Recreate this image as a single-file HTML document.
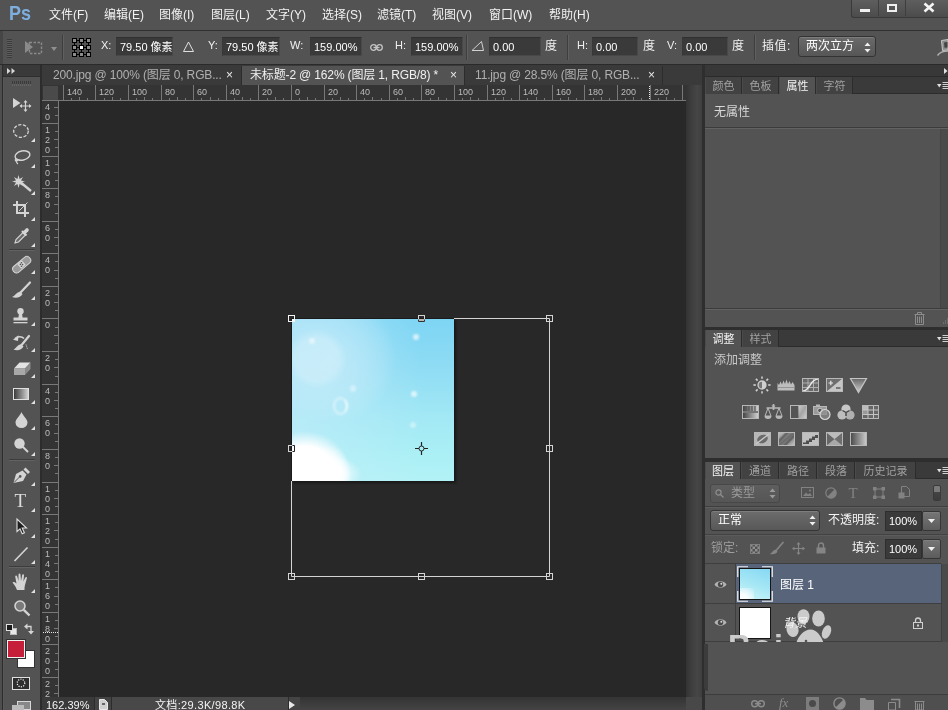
<!DOCTYPE html>
<html lang="zh-CN">
<head>
<meta charset="utf-8">
<title>Photoshop</title>
<style>
html,body{margin:0;padding:0;}
body{width:948px;height:710px;overflow:hidden;position:relative;background:#282828;
 font-family:"Liberation Sans","Noto Sans CJK SC",sans-serif;font-size:12px;color:#e6e6e6;}
#root{position:absolute;left:0;top:0;width:948px;height:710px;overflow:hidden;will-change:transform;}
.a{position:absolute;}
.t{position:absolute;white-space:nowrap;line-height:14px;}
svg{position:absolute;overflow:visible;}
#menubar{left:0;top:0;width:948px;height:30px;background:#535353;}
#menubar .t{top:8px;font-size:12px;color:#f2f2f2;}
#optbar{left:0;top:30px;width:948px;height:35px;background:#535353;border-top:1px solid #303030;border-bottom:1px solid #2a2a2a;box-sizing:border-box;z-index:2;}
.inp{position:absolute;top:6px;height:19px;background:#3a3a3a;box-sizing:border-box;border:1px solid #484848;border-top-color:#303030;border-left-color:#383838;color:#fff;font-size:11px;line-height:18px;padding-left:3px;white-space:nowrap;}
#optbar .t{top:7px;color:#f0f0f0;font-size:11px}
.sep{position:absolute;top:4px;width:1px;height:25px;background:#3e3e3e;border-right:1px solid #606060;}
#tools{left:3px;top:64px;width:37px;height:646px;background:#535353;border-left:1px solid #585858;box-sizing:border-box}
#toolhead{left:-1px;top:0;width:37px;height:12px;background:#3a3a3a;border-bottom:1px solid #2e2e2e}
.tsep{position:absolute;left:5px;width:26px;height:1px;background:#3c3c3c;border-bottom:1px solid #626262;}
#tabbar{left:42px;top:64px;width:661px;height:21px;background:#3a3a3a;}
.tab{position:absolute;top:2px;height:19px;box-sizing:border-box;font-size:12px;letter-spacing:-.15px;line-height:18px;color:#b0b0b0;white-space:nowrap;border-right:1px solid #2c2c2c;}
.tab.on{background:#535353;color:#f0f0f0;}
.tab span{position:absolute;top:0}
#hruler{left:42px;top:85px;width:644px;height:16px;background:#343434;}
#vruler{left:42px;top:101px;width:17px;height:596px;background:#343434;}
#canvas{left:59px;top:101px;width:627px;height:596px;background:#282828;}
#vscroll{left:686px;top:85px;width:16px;height:612px;background:linear-gradient(90deg,#333 0,#3e3e3e 35%,#464646 72%,#3e3e3e 100%);}
#status{left:42px;top:697px;width:661px;height:13px;background:#3a3a3a;}
#dock{left:702px;top:64px;width:246px;height:646px;background:#2e2e2e;}
.phead{position:absolute;left:3px;width:243px;background:#3a3a3a;}
.pbody{position:absolute;left:3px;width:243px;background:#535353;}
.ptab{position:absolute;top:0;height:17px;font-size:12px;line-height:19px;color:#a0a0a0;white-space:nowrap;box-sizing:border-box;overflow:hidden;border-right:1px solid #2c2c2c;border-left:1px solid #4a4a4a;text-align:center;background:#424242}
.ptab.on{background:#535353;color:#f4f4f4;}
.rt{font-size:9px;fill:#bcbcbc;font-family:"Liberation Sans",sans-serif}
</style>
</head>
<body>
<div id="root">
<div id="menubar" class="a">
<svg style="left:9px;top:4px" width="24" height="20"><text x="0" y="16.2" font-family="Liberation Sans,sans-serif" font-weight="bold" font-size="21" textLength="22" lengthAdjust="spacingAndGlyphs" fill="#7eaede">Ps</text></svg>
<span class="t" style="left:49px">文件(F)</span><span class="t" style="left:104px">编辑(E)</span><span class="t" style="left:159px">图像(I)</span><span class="t" style="left:211px">图层(L)</span><span class="t" style="left:266px">文字(Y)</span><span class="t" style="left:322px">选择(S)</span><span class="t" style="left:377px">滤镜(T)</span><span class="t" style="left:432px">视图(V)</span><span class="t" style="left:489px">窗口(W)</span><span class="t" style="left:549px">帮助(H)</span>
<div class="a" style="left:851px;top:0;width:97px;height:18px;background:linear-gradient(#5e5e5e,#4c4c4c);border-left:1px solid #3a3a3a;border-bottom:1px solid #3a3a3a;border-radius:0 0 0 3px;box-sizing:border-box"></div><div class="a" style="left:878px;top:0;width:1px;height:16px;background:#3e3e3e"></div><div class="a" style="left:905px;top:0;width:1px;height:16px;background:#3e3e3e"></div><div class="a" style="left:860px;top:9px;width:10px;height:3px;background:#f0f0f0"></div><div class="a" style="left:887px;top:4px;width:10px;height:8px;border:2px solid #f0f0f0;border-top-width:2px;box-sizing:border-box"></div><svg style="left:923px;top:3px" width="12" height="9"><path d="M1.500 0.500L10.500 8.500M10.500 0.500L1.500 8.500" stroke="#f4f4f4" stroke-width="2.600"/></svg></div>
<div id="optbar" class="a">
<div class="a" style="left:0;top:0;width:3px;height:33px;background:#464646"></div><div class="a" style="left:7px;top:8px;width:5px;height:19px;background:repeating-linear-gradient(#3c3c3c 0,#3c3c3c 1px,#5c5c5c 1px,#5c5c5c 2px)"></div><svg style="left:24px;top:9px" width="20" height="16"><path d="M1 1L1 13L9 7Z" fill="#8a8a8a"/><rect x="5.5" y="2.5" width="12" height="11" fill="none" stroke="#8a8a8a" stroke-width="1.4" stroke-dasharray="2.5 1.5"/></svg><svg style="left:51px;top:16px" width="7" height="4"><path d="M0 0L6 0L3 4Z" fill="#909090"/></svg><div class="sep" style="left:62px"></div><svg style="left:72px;top:7px" width="20" height="20"><path d="M2.500 2.500H16.500V16.500H2.500ZM9.500 2.500V16.500M2.500 9.500H16.500" stroke="#000" stroke-width="1" fill="none"/><rect x="0.5" y="0.5" width="4" height="4" fill="#8c8c8c" stroke="#000" stroke-width="1"/><rect x="0.5" y="7.5" width="4" height="4" fill="#8c8c8c" stroke="#000" stroke-width="1"/><rect x="0.5" y="14.5" width="4" height="4" fill="#8c8c8c" stroke="#000" stroke-width="1"/><rect x="7.5" y="0.5" width="4" height="4" fill="#8c8c8c" stroke="#000" stroke-width="1"/><rect x="7.5" y="7.5" width="4" height="4" fill="#fff" stroke="#000" stroke-width="1"/><rect x="7.5" y="14.5" width="4" height="4" fill="#8c8c8c" stroke="#000" stroke-width="1"/><rect x="14.5" y="0.5" width="4" height="4" fill="#8c8c8c" stroke="#000" stroke-width="1"/><rect x="14.5" y="7.5" width="4" height="4" fill="#8c8c8c" stroke="#000" stroke-width="1"/><rect x="14.5" y="14.5" width="4" height="4" fill="#8c8c8c" stroke="#000" stroke-width="1"/></svg><span class="t" style="left:101px">X:</span><div class="inp" style="left:116px;width:57px">79.50 像素</div><svg style="left:182px;top:10px" width="13" height="12"><path d="M6.5 1L11.5 10.5H1.5Z" fill="none" stroke="#e0e0e0" stroke-width="1"/></svg><span class="t" style="left:208px">Y:</span><div class="inp" style="left:222px;width:58px">79.50 像素</div><span class="t" style="left:290px">W:</span><div class="inp" style="left:310px;width:52px">159.00%</div><svg style="left:370px;top:13px" width="13" height="8"><rect x="0.700" y="0.700" width="5.600" height="5.600" rx="2.800" fill="none" stroke="#c4c4c4" stroke-width="1.300"/><rect x="6.700" y="0.700" width="5.600" height="5.600" rx="2.800" fill="none" stroke="#c4c4c4" stroke-width="1.300"/><path d="M3.500 3.500H9.500" stroke="#c4c4c4" stroke-width="1.300"/></svg><span class="t" style="left:395px">H:</span><div class="inp" style="left:411px;width:52px">159.00%</div><div class="sep" style="left:466px"></div><svg style="left:471px;top:9px" width="14" height="12"><path d="M1 10.500L10.500 1.500L12.500 10.500Z" fill="none" stroke="#d0d0d0" stroke-width="1"/></svg><div class="inp" style="left:489px;width:52px">0.00</div><span class="t" style="left:545px;top:8px;font-size:12px">度</span><div class="sep" style="left:567px"></div><span class="t" style="left:577px">H:</span><div class="inp" style="left:592px;width:46px">0.00</div><span class="t" style="left:643px;top:8px;font-size:12px">度</span><span class="t" style="left:667px">V:</span><div class="inp" style="left:682px;width:46px">0.00</div><span class="t" style="left:732px;top:8px;font-size:12px">度</span><div class="sep" style="left:754px"></div><span class="t" style="left:762px;top:8px;font-size:12px;letter-spacing:.5px">插值:</span><div class="a" style="left:798px;top:5px;width:78px;height:21px;box-sizing:border-box;border:1px solid #333;border-radius:3px;background:linear-gradient(#6a6a6a,#565656);color:#fff;line-height:19px;padding-left:7px;box-shadow:inset 0 1px 0 #7c7c7c">两次立方</div><svg style="left:864px;top:11px" width="7" height="11"><path d="M0.5 4L3.5 0.5L6.5 4ZM0.5 7L3.5 10.5L6.5 7Z" fill="#f0f0f0"/></svg><svg style="left:936px;top:8px" width="12" height="18"><path d="M5.500 1.500L12 0.500V11L6.500 11.500Z" fill="#8a8a8a" stroke="#c8c8c8" stroke-width="1"/><path d="M8 3.500L11.500 3V8.500L8.500 8.800Z" fill="#444"/><path d="M1.500 16.500C4 13 8 12 12 12" fill="none" stroke="#b0b0b0" stroke-width="1.400"/></svg></div>
<div class="a" style="left:0;top:64px;width:2px;height:646px;background:#4e4e4e"></div><div class="a" style="left:2px;top:64px;width:1px;height:646px;background:#2c2c2c"></div><div id="tools" class="a">
<div id="toolhead" class="a"></div>
<svg style="left:3px;top:4px" width="9" height="6"><path d="M0 0L3.5 3L0 6ZM4.5 0L8 3L4.5 6Z" fill="#d8d8d8"/></svg><div class="a" style="left:8px;top:17px;width:19px;height:3px;background:repeating-linear-gradient(90deg,#3a3a3a 0,#3a3a3a 1px,#535353 1px,#535353 2px)"></div><div class="a" style="left:8px;top:20px;width:19px;height:2px;background:repeating-linear-gradient(90deg,#646464 0,#646464 1px,#535353 1px,#535353 2px)"></div><svg style="left:9px;top:34px" width="18" height="14" viewBox="0 0 18 14"><path d="M0 0L0 10L7.5 5Z" fill="#d4d4d4"/><path d="M12.5 3V13M7.5 8H17.5" stroke="#d4d4d4" stroke-width="1.2" fill="none"/><path d="M12.5 2L14.5 4.5H10.5ZM12.5 14L14.5 11.5H10.5ZM6.5 8L9 6V10ZM18.5 8L16 6V10Z" fill="#d4d4d4"/></svg>
<svg style="left:9px;top:60px" width="17" height="15" viewBox="0 0 17 15"><ellipse cx="8" cy="7" rx="7.3" ry="6.3" fill="none" stroke="#d4d4d4" stroke-width="1.3" stroke-dasharray="3.2 1.6"/></svg>
<svg style="left:27px;top:74px" width="4" height="4"><path d="M4 0V4H0Z" fill="#e0e0e0"/></svg><svg style="left:9px;top:86px" width="18" height="16" viewBox="0 0 18 16"><ellipse cx="9.5" cy="5.5" rx="7.5" ry="4.6" fill="none" stroke="#d4d4d4" stroke-width="1.4" transform="rotate(-12 9.5 5.5)"/><path d="M3.2 8.5C1.5 9.5 2.2 11.5 4 11C5.5 10.5 4.5 9 3.5 10C2.8 11 3.6 13 5 14" fill="none" stroke="#d4d4d4" stroke-width="1.1"/></svg>
<svg style="left:27px;top:100px" width="4" height="4"><path d="M4 0V4H0Z" fill="#e0e0e0"/></svg><svg style="left:8px;top:111px" width="21" height="18" viewBox="0 0 21 18"><path d="M7 6L19 16" stroke="#d4d4d4" stroke-width="2.4"/><path d="M6.5 0L7.6 4L11 2L9 5.4L13 6.5L9 7.6L11 11L7.6 9L6.5 13L5.4 9L2 11L4 7.6L0 6.5L4 5.4L2 2L5.4 4Z" fill="#d4d4d4"/></svg>
<svg style="left:27px;top:127px" width="4" height="4"><path d="M4 0V4H0Z" fill="#e0e0e0"/></svg><svg style="left:9px;top:137px" width="16" height="16" viewBox="0 0 16 16"><path d="M4 0V12H16M0 4H12V16" fill="none" stroke="#d4d4d4" stroke-width="2"/><path d="M6 10L14.5 1.5" stroke="#d4d4d4" stroke-width="1"/></svg>
<svg style="left:27px;top:153px" width="4" height="4"><path d="M4 0V4H0Z" fill="#e0e0e0"/></svg><svg style="left:10px;top:163px" width="16" height="17" viewBox="0 0 16 17"><path d="M1 16L2 12.5L9 5.5L11.5 8L4.5 15Z" fill="#6a6a6a" stroke="#d4d4d4" stroke-width="1.1"/><path d="M8 4L12.5 8.5" stroke="#d4d4d4" stroke-width="2.2"/><path d="M10.5 5.5L13 3" stroke="#d4d4d4" stroke-width="3.6" stroke-linecap="round"/></svg>
<svg style="left:27px;top:179px" width="4" height="4"><path d="M4 0V4H0Z" fill="#e0e0e0"/></svg><div class="tsep" style="top:185px"></div><svg style="left:9px;top:192px" width="17" height="17" viewBox="0 0 17 17"><rect x="-2" y="5" width="21" height="7.6" rx="3.6" fill="#9a9a9a" stroke="#d4d4d4" stroke-width="1" transform="rotate(-40 8.5 8.5)"/><rect x="5.5" y="5.5" width="6" height="6" fill="#d4d4d4" transform="rotate(-40 8.5 8.5)"/><circle cx="7.4" cy="8.4" r="0.8" fill="#555"/><circle cx="9.6" cy="8.6" r="0.8" fill="#555"/><circle cx="8.5" cy="6.8" r="0.8" fill="#555"/><circle cx="8.5" cy="10.2" r="0.8" fill="#555"/></svg>
<svg style="left:27px;top:206px" width="4" height="4"><path d="M4 0V4H0Z" fill="#e0e0e0"/></svg><svg style="left:8px;top:218px" width="19" height="17" viewBox="0 0 19 17"><path d="M18 0.5L9 10" stroke="#d4d4d4" stroke-width="2.2" stroke-linecap="round"/><path d="M8 9.5L10.5 12C9 15.5 4 16.5 0 15C3 14 3.5 11 8 9.5Z" fill="#d4d4d4"/></svg>
<svg style="left:27px;top:232px" width="4" height="4"><path d="M4 0V4H0Z" fill="#e0e0e0"/></svg><svg style="left:9px;top:244px" width="16" height="16" viewBox="0 0 16 16"><circle cx="7.5" cy="3.2" r="3.2" fill="#d4d4d4"/><path d="M6 5H9L9.6 10H5.4Z" fill="#d4d4d4"/><rect x="0.5" y="9.5" width="14" height="3" fill="#d4d4d4"/><rect x="0.5" y="14" width="14" height="1.3" fill="#d4d4d4"/></svg>
<svg style="left:27px;top:258px" width="4" height="4"><path d="M4 0V4H0Z" fill="#e0e0e0"/></svg><svg style="left:8px;top:270px" width="19" height="17" viewBox="0 0 19 17"><path d="M17 2L10 10.5" stroke="#d4d4d4" stroke-width="2.2" stroke-linecap="round"/><path d="M9 10L11.5 12.5C10 16 5 17 1.5 15.5C4 14.5 4.5 11.5 9 10Z" fill="#d4d4d4"/><path d="M3 4.5C6 2 10 2.5 12 4.5" fill="none" stroke="#d4d4d4" stroke-width="1.6"/><path d="M1 5.8L6.5 1.2L6 7Z" fill="#d4d4d4"/><path d="M14 10.5L15.5 15" stroke="#d4d4d4" stroke-width="1" stroke-dasharray="1 1"/></svg>
<svg style="left:27px;top:284px" width="4" height="4"><path d="M4 0V4H0Z" fill="#e0e0e0"/></svg><svg style="left:9px;top:298px" width="18" height="14" viewBox="0 0 18 14"><path d="M6.5 0.5H17.5L12 6.5H1Z" fill="#e2e2e2"/><path d="M1 6.5H12V13H1Z" fill="#a8a8a8"/><path d="M12 6.5L17.5 0.5V7L12 13Z" fill="#8a8a8a"/></svg>
<svg style="left:27px;top:310px" width="4" height="4"><path d="M4 0V4H0Z" fill="#e0e0e0"/></svg><div class="a" style="left:9px;top:324px;width:16px;height:12px;box-sizing:border-box;border:1px solid #e0e0e0;background:linear-gradient(90deg,#3c3c3c,#d0d0d0)"></div><svg style="left:27px;top:336px" width="4" height="4"><path d="M4 0V4H0Z" fill="#e0e0e0"/></svg><svg style="left:11px;top:348px" width="13" height="16" viewBox="0 0 13 16"><path d="M6.5 0C8 4 12.5 7 12.5 10.5A6 5.5 0 0 1 0.5 10.5C0.500 7 5 4 6.500 0Z" fill="#d4d4d4"/></svg>
<svg style="left:27px;top:362px" width="4" height="4"><path d="M4 0V4H0Z" fill="#e0e0e0"/></svg><svg style="left:10px;top:374px" width="16" height="16" viewBox="0 0 16 16"><circle cx="5.5" cy="5.5" r="5.2" fill="#d4d4d4"/><path d="M8.5 8.5L14 14" stroke="#d4d4d4" stroke-width="2"/></svg>
<svg style="left:27px;top:388px" width="4" height="4"><path d="M4 0V4H0Z" fill="#e0e0e0"/></svg><div class="tsep" style="top:395px"></div><svg style="left:9px;top:402px" width="18" height="18" viewBox="0 0 18 18"><path d="M0.5 17L3 8L9.5 4.5L13.5 8.5L10 15Z" fill="#d4d4d4"/><path d="M1 16.500L6.5 11" stroke="#555" stroke-width="1"/><circle cx="7.2" cy="10.400" r="1.3" fill="#555"/><path d="M10.5 3.500L12.500 1.500L17 6L15 8Z" fill="#d4d4d4"/></svg>
<svg style="left:27px;top:418px" width="4" height="4"><path d="M4 0V4H0Z" fill="#e0e0e0"/></svg><svg style="left:10px;top:427px" width="16" height="18"><text x="0.5" y="15.5" font-family="Liberation Serif,serif" font-size="19" fill="#dcdcdc">T</text></svg><svg style="left:27px;top:444px" width="4" height="4"><path d="M4 0V4H0Z" fill="#e0e0e0"/></svg><svg style="left:12px;top:454px" width="12" height="17" viewBox="0 0 12 17"><path d="M1 1V13.5L4 10.800L6.2 15.800L8.400 14.800L6.2 10H10.500Z" fill="#1e1e1e" stroke="#e0e0e0" stroke-width="1.1"/></svg>
<svg style="left:27px;top:470px" width="4" height="4"><path d="M4 0V4H0Z" fill="#e0e0e0"/></svg><svg style="left:10px;top:483px" width="14" height="15" viewBox="0 0 14 15"><path d="M0.5 14L13.500 0.500" stroke="#d4d4d4" stroke-width="1.6"/></svg>
<svg style="left:27px;top:496px" width="4" height="4"><path d="M4 0V4H0Z" fill="#e0e0e0"/></svg><div class="tsep" style="top:502px"></div><svg style="left:8px;top:509px" width="18" height="18" viewBox="0 0 18 18"><path d="M5 17C3.500 13 1.500 11 0.500 9.500C1.500 8.300 3 9 4.500 10.500L3.200 3.500C3.200 2.200 4.800 2.200 5.200 3.500L6.500 8L6.500 1.500C6.700 0.200 8.300 0.200 8.500 1.500L9 8L10.200 2C10.600 0.800 12.100 1.100 12 2.500L11.400 8.500L13.300 4.500C13.900 3.500 15.200 4 14.900 5.300L13 12C12.500 14 12.500 15.500 12.500 17Z" fill="#d4d4d4"/></svg>
<svg style="left:27px;top:525px" width="4" height="4"><path d="M4 0V4H0Z" fill="#e0e0e0"/></svg><svg style="left:10px;top:536px" width="17" height="17" viewBox="0 0 17 17"><circle cx="6" cy="6" r="5" fill="#7a7a7a" stroke="#d4d4d4" stroke-width="1.6"/><path d="M9.800 9.800L15.500 15.500" stroke="#d4d4d4" stroke-width="2.4"/></svg>
<div class="a" style="left:6px;top:564px;width:7px;height:7px;background:#e8e8e8;border:1px solid #bbb;box-sizing:border-box"></div><div class="a" style="left:2px;top:560px;width:7px;height:7px;background:#1a1a1a;border:1px solid #e0e0e0;box-sizing:border-box"></div><svg style="left:20px;top:559px" width="11" height="12" viewBox="0 0 11 12"><path d="M2.500 3.500H7V9" fill="none" stroke="#d4d4d4" stroke-width="1.3"/><path d="M0 3.500L3.500 0.500V6.500ZM7 11.500L4 8H10Z" fill="#d4d4d4"/></svg>
<div class="a" style="left:13px;top:586px;width:18px;height:18px;background:#fff;border:1px solid #333;box-sizing:border-box"></div><div class="a" style="left:3px;top:576px;width:18px;height:18px;background:#c61f3a;border:1px solid #f2f2f2;box-sizing:border-box;box-shadow:0 0 0 1px #333"></div><div class="a" style="left:8px;top:613px;width:18px;height:13px;border:1px solid #e0e0e0;background:#2e2e2e;box-sizing:border-box"></div><svg style="left:12px;top:614px" width="10" height="10" viewBox="0 0 10 10"><circle cx="5" cy="5" r="3.800" fill="none" stroke="#f0f0f0" stroke-width="1.2" stroke-dasharray="1.200 1.200"/></svg>
<div class="a" style="left:13px;top:637px;width:14px;height:9px;border:1px solid #d8d8d8;background:#888;box-sizing:border-box"></div><div class="a" style="left:8px;top:641px;width:12px;height:6px;background:#bbb"></div></div>
<div class="a" style="left:40px;top:64px;width:2px;height:646px;background:#2c2c2c"></div><div id="tabbar" class="a">
<div class="tab" style="left:0;width:200px"><span style="left:11px">200.jpg @ 100% (图层 0, RGB...</span><span style="left:184px;color:#e8e8e8">×</span></div><div class="tab on" style="left:200px;width:223px"><span style="left:8px">未标题-2 @ 162% (图层 1, RGB/8) *</span><span style="left:208px;color:#e8e8e8">×</span></div><div class="tab" style="left:423px;width:198px"><span style="left:10px">11.jpg @ 28.5% (图层 0, RGB...</span><span style="left:183px;color:#e8e8e8">×</span></div></div>
<svg id="hruler" class="a" width="644" height="16" viewBox="42 85 644 16"><rect x="42" y="85" width="644" height="16" fill="#343434"/><rect x="43" y="86" width="15" height="14" fill="#4a4a4a"/><path d="M42 100.500H686" stroke="#787878" stroke-width="1"/><path d="M63.5 85V101M71.5 98V101M79.5 97V101M87.5 98V101M95.5 85V101M104.5 98V101M112.5 97V101M120.5 98V101M128.5 85V101M136.5 98V101M144.5 97V101M152.5 98V101M161.5 85V101M169.5 98V101M177.5 97V101M185.5 98V101M193.5 85V101M201.5 98V101M210.5 97V101M218.5 98V101M226.5 85V101M234.5 98V101M242.5 97V101M250.5 98V101M258.5 85V101M267.5 98V101M275.5 97V101M283.5 98V101M291.5 85V101M299.5 98V101M307.5 97V101M315.5 98V101M324.5 85V101M332.5 98V101M340.5 97V101M348.5 98V101M356.5 85V101M364.5 98V101M372.5 97V101M381.5 98V101M389.5 85V101M397.5 98V101M405.5 97V101M413.5 98V101M421.5 85V101M430.5 98V101M438.5 97V101M446.5 98V101M454.5 85V101M462.5 98V101M470.5 97V101M478.5 98V101M487.5 85V101M495.5 98V101M503.5 97V101M511.5 98V101M519.5 85V101M527.5 98V101M536.5 97V101M544.5 98V101M552.5 85V101M560.5 98V101M568.5 97V101M576.5 98V101M584.5 85V101M593.5 98V101M601.5 97V101M609.5 98V101M617.5 85V101M625.5 98V101M633.5 97V101M641.5 98V101M650.5 85V101M658.5 98V101M666.5 97V101M674.5 98V101M682.5 85V101" stroke="#787878" stroke-width="1"/><text class="rt" x="67" y="95">140</text><text class="rt" x="99" y="95">120</text><text class="rt" x="132" y="95">100</text><text class="rt" x="165" y="95">80</text><text class="rt" x="197" y="95">60</text><text class="rt" x="230" y="95">40</text><text class="rt" x="262" y="95">20</text><text class="rt" x="295" y="95">0</text><text class="rt" x="328" y="95">20</text><text class="rt" x="360" y="95">40</text><text class="rt" x="393" y="95">60</text><text class="rt" x="425" y="95">80</text><text class="rt" x="458" y="95">100</text><text class="rt" x="491" y="95">120</text><text class="rt" x="523" y="95">140</text><text class="rt" x="556" y="95">160</text><text class="rt" x="588" y="95">180</text><text class="rt" x="621" y="95">200</text><text class="rt" x="654" y="95">220</text><path d="M649.500 86V100" stroke="#e8e8e8" stroke-width="1" stroke-dasharray="1 1"/></svg>
<svg id="vruler" class="a" width="17" height="596" viewBox="42 101 17 596"><rect x="42" y="101" width="17" height="596" fill="#343434"/><path d="M58.500 101V697" stroke="#787878" stroke-width="1"/><path d="M54 107.5H59M55 115.5H59M42 123.5H59M55 131.5H59M54 139.5H59M55 147.5H59M42 156.5H59M55 164.5H59M54 172.5H59M55 180.5H59M42 188.5H59M55 196.5H59M54 204.5H59M55 213.5H59M42 221.5H59M55 229.5H59M54 237.5H59M55 245.5H59M42 253.5H59M55 261.5H59M54 270.5H59M55 278.5H59M42 286.5H59M55 294.5H59M54 302.5H59M55 310.5H59M42 318.5H59M55 327.5H59M54 335.5H59M55 343.5H59M42 351.5H59M55 359.5H59M54 367.5H59M55 376.5H59M42 384.5H59M55 392.5H59M54 400.5H59M55 408.5H59M42 416.5H59M55 424.5H59M54 433.5H59M55 441.5H59M42 449.5H59M55 457.5H59M54 465.5H59M55 473.5H59M42 482.5H59M55 490.5H59M54 498.5H59M55 506.5H59M42 514.5H59M55 522.5H59M54 530.5H59M55 539.5H59M42 547.5H59M55 555.5H59M54 563.5H59M55 571.5H59M42 579.5H59M55 587.5H59M54 596.5H59M55 604.5H59M42 612.5H59M55 620.5H59M54 628.5H59M55 636.5H59M42 644.5H59M55 653.5H59M54 661.5H59M55 669.5H59M42 677.5H59M55 685.5H59M54 693.5H59" stroke="#787878" stroke-width="1"/><text class="rt" x="45" y="110">4</text><text class="rt" x="45" y="120">0</text><text class="rt" x="45" y="133">1</text><text class="rt" x="45" y="143">2</text><text class="rt" x="45" y="153">0</text><text class="rt" x="45" y="166">1</text><text class="rt" x="45" y="176">0</text><text class="rt" x="45" y="186">0</text><text class="rt" x="45" y="198">8</text><text class="rt" x="45" y="208">0</text><text class="rt" x="45" y="231">6</text><text class="rt" x="45" y="241">0</text><text class="rt" x="45" y="263">4</text><text class="rt" x="45" y="273">0</text><text class="rt" x="45" y="296">2</text><text class="rt" x="45" y="306">0</text><text class="rt" x="45" y="328">0</text><text class="rt" x="45" y="361">2</text><text class="rt" x="45" y="371">0</text><text class="rt" x="45" y="394">4</text><text class="rt" x="45" y="404">0</text><text class="rt" x="45" y="426">6</text><text class="rt" x="45" y="436">0</text><text class="rt" x="45" y="459">8</text><text class="rt" x="45" y="469">0</text><text class="rt" x="45" y="492">1</text><text class="rt" x="45" y="502">0</text><text class="rt" x="45" y="512">0</text><text class="rt" x="45" y="524">1</text><text class="rt" x="45" y="534">2</text><text class="rt" x="45" y="544">0</text><text class="rt" x="45" y="557">1</text><text class="rt" x="45" y="567">4</text><text class="rt" x="45" y="577">0</text><text class="rt" x="45" y="589">1</text><text class="rt" x="45" y="599">6</text><text class="rt" x="45" y="609">0</text><text class="rt" x="45" y="622">1</text><text class="rt" x="45" y="632">8</text><text class="rt" x="45" y="642">0</text><text class="rt" x="45" y="654">2</text><text class="rt" x="45" y="664">0</text><text class="rt" x="45" y="674">0</text><text class="rt" x="45" y="687">2</text><text class="rt" x="45" y="697">2</text><path d="M43 632.500H58" stroke="#e8e8e8" stroke-width="1" stroke-dasharray="1 1"/></svg>
<div id="canvas" class="a"></div>
<div class="a" style="left:293px;top:320px;width:163px;height:163px;background:#181818;filter:blur(1.200px)"></div><div class="a" style="left:292px;top:319px;width:162px;height:162px;overflow:hidden;background:linear-gradient(180deg,#7dd5f4 0%,#8fdcf4 30%,#a2e8f5 60%,#abf0f5 85%,#b2f2f6 100%)"><div class="a" style="left:0;top:0;width:162px;height:162px;background:linear-gradient(90deg,rgba(200,236,250,.55) 0%,rgba(200,236,250,.25) 45%,rgba(200,236,250,0) 80%)"></div><div class="a" style="left:-25px;top:-25px;width:130px;height:130px;background:radial-gradient(closest-side,rgba(214,240,250,.5),rgba(214,240,250,.32) 55%,rgba(214,240,250,.18) 80%,rgba(214,240,250,0))"></div><div class="a" style="left:-5px;top:10px;width:60px;height:60px;border-radius:50%;background:radial-gradient(closest-side,rgba(225,245,252,.35) 70%,rgba(225,245,252,0))"></div><div class="a" style="left:-32px;top:112px;width:90px;height:80px;background:radial-gradient(closest-side,#fff 62%,rgba(255,255,255,0))"></div><div class="a" style="left:14px;top:126px;width:46px;height:64px;background:radial-gradient(closest-side,#fff 45%,rgba(255,255,255,0))"></div><div class="a" style="left:-10px;top:135px;width:80px;height:40px;background:radial-gradient(closest-side,rgba(255,255,255,.9) 40%,rgba(255,255,255,0))"></div><div class="a" style="left:41px;top:78px;width:11px;height:14px;border-radius:50%;border:2px solid rgba(255,255,255,.5);border-right-color:rgba(255,255,255,.85);filter:blur(.9px)"></div><div class="a" style="left:121px;top:15px;width:6px;height:6px;border-radius:50%;background:rgba(255,255,255,.65);filter:blur(1.200px)"></div><div class="a" style="left:119px;top:72px;width:6px;height:6px;border-radius:50%;background:rgba(255,255,255,.65);filter:blur(1.200px)"></div><div class="a" style="left:17px;top:19px;width:6px;height:6px;border-radius:50%;background:rgba(255,255,255,.5);filter:blur(1.200px)"></div><div class="a" style="left:58px;top:66px;width:6px;height:7px;border-radius:50%;background:rgba(255,255,255,.4);filter:blur(1.200px)"></div><div class="a" style="left:118px;top:103px;width:6px;height:6px;border-radius:50%;background:rgba(255,255,255,.4);filter:blur(1.200px)"></div></div>
<svg class="a" style="left:0;top:0" width="948" height="710"><path d="M454 318.500H549.500V576.500H291.500V481" fill="none" stroke="#d4d4d4" stroke-width="1"/><path d="M292 318.500H454M291.500 319V481" fill="none" stroke="#1a1a1a" stroke-width="1"/><rect x="288.5" y="315.5" width="6" height="6" fill="none" stroke="#f4f4f4" stroke-width="1"/><rect x="418.5" y="315.5" width="6" height="6" fill="none" stroke="#d4d4d4" stroke-width="1"/><rect x="546.5" y="315.5" width="6" height="6" fill="none" stroke="#d4d4d4" stroke-width="1"/><rect x="288.5" y="445.5" width="6" height="6" fill="none" stroke="#d4d4d4" stroke-width="1"/><rect x="546.5" y="445.5" width="6" height="6" fill="none" stroke="#d4d4d4" stroke-width="1"/><rect x="288.5" y="573.5" width="6" height="6" fill="none" stroke="#d4d4d4" stroke-width="1"/><rect x="418.5" y="573.5" width="6" height="6" fill="none" stroke="#d4d4d4" stroke-width="1"/><rect x="546.5" y="573.5" width="6" height="6" fill="none" stroke="#d4d4d4" stroke-width="1"/><path d="M418.500 319.500V321.500H424.500V319.500" fill="none" stroke="#333" stroke-width="1"/><rect x="419" y="319" width="5" height="2" fill="#b8b8b8"/><path d="M292.500 445.500H294.500V451.500H292.500" fill="none" stroke="#222" stroke-width="1"/><rect x="292" y="319" width="2" height="2" fill="#fff"/><circle cx="421.500" cy="448.500" r="2.500" fill="none" stroke="#222" stroke-width="1"/><path d="M421.500 442V446M421.500 451V455M415 448.500H419M424 448.500H428" stroke="#222" stroke-width="1.200"/></svg>
<div id="vscroll" class="a"></div>
<div class="a" style="left:702px;top:64px;width:1px;height:646px;background:#262626"></div><div id="status" class="a"><span class="t" style="left:4px;top:1px;font-size:11px;color:#f4f4f4">162.39%</span><div class="a" style="left:52px;top:0;width:16px;height:14px;background:#444;border-left:1px solid #2c2c2c;border-right:1px solid #2c2c2c"></div><svg style="left:57px;top:2px" width="9" height="11"><path d="M0.500 0.500H5.500L8.500 3.500V10.500H0.500Z" fill="#cfcfcf" stroke="#e8e8e8"/><path d="M3 4H6V6H3Z" fill="#666"/></svg><div class="a" style="left:70px;top:0;width:176px;height:14px;background:#484848"></div><span class="t" style="left:113px;top:1px;font-size:11px;letter-spacing:.35px;color:#f4f4f4">文档:29.3K/98.8K</span><div class="a" style="left:246px;top:0;width:12px;height:14px;background:#444;border-left:1px solid #2c2c2c"></div><svg style="left:247px;top:4px" width="6" height="8"><path d="M0 0L6 4L0 8Z" fill="#e8e8e8"/></svg><div class="a" style="left:258px;top:0;width:386px;height:14px;background:linear-gradient(#343434,#454545)"></div><div class="a" style="left:644px;top:0;width:17px;height:14px;background:#484848"></div></div>
<div id="dock" class="a">
<div class="phead" style="top:0;height:13px;background:#383838;border-bottom:1px solid #2a2a2a;box-sizing:border-box"></div><svg style="left:242px;top:4px" width="4" height="6" viewBox="0 0 4 6"><path d="M0 0L3.500 3L0 6Z" fill="#e0e0e0"/></svg>
<div class="phead" style="top:13px;height:17px;background:#3a3a3a;border-bottom:1px solid #2c2c2c;box-sizing:border-box"><div class="ptab" style="left:0px;width:37px;font-size:11px">颜色</div><div class="ptab" style="left:37px;width:37px;font-size:11px">色板</div><div class="ptab on" style="left:74px;width:37px;font-size:11px">属性</div><div class="ptab" style="left:111px;width:37px;font-size:11px">字符</div><svg style="left:232px;top:5px" width="11" height="8"><path d="M0 2H4.500L2.250 5.500Z" fill="#e0e0e0"/><path d="M5.500 0.500H11M5.500 2.500H11M5.500 4.500H11M5.500 6.500H11" stroke="#d0d0d0" stroke-width="1"/></svg></div>
<div class="pbody" style="top:30px;height:233px"></div><span class="t" style="left:12px;top:41px;font-size:12px;color:#d6d6d6">无属性</span><div class="a" style="left:3px;top:63px;width:243px;height:1px;background:#3c3c3c;border-bottom:1px solid #626262"></div><div class="a" style="left:238px;top:65px;width:8px;height:179px;background:#4a4a4a;border-left:1px solid #444"></div><div class="a" style="left:3px;top:244px;width:243px;height:1px;background:#3c3c3c;border-bottom:1px solid #626262"></div><svg style="left:212px;top:248px" width="11" height="13" viewBox="0 0 11 13"><path d="M0.500 2.500H10.500M3.500 2V0.500H7.500V2M1.500 3V12.500H9.500V3M3.500 4.500V11M5.500 4.500V11M7.500 4.500V11" fill="none" stroke="#8c8c8c" stroke-width="1"/></svg>
<svg style="left:240px;top:254px" width="6" height="6"><path d="M5.500 0.500V1.500M3.500 2.500V3.500M5.500 2.500V3.500M1.500 4.500V5.500M3.500 4.500V5.500M5.500 4.500V5.500" stroke="#888"/></svg><div class="phead" style="top:266px;height:17px;background:#3a3a3a;border-bottom:1px solid #2c2c2c;box-sizing:border-box"><div class="ptab on" style="left:0px;width:37px;font-size:11px">调整</div><div class="ptab" style="left:37px;width:37px;font-size:11px">样式</div><svg style="left:232px;top:5px" width="11" height="8"><path d="M0 2H4.500L2.250 5.500Z" fill="#e0e0e0"/><path d="M5.500 0.500H11M5.500 2.500H11M5.500 4.500H11M5.500 6.500H11" stroke="#d0d0d0" stroke-width="1"/></svg></div>
<div class="pbody" style="top:283px;height:111px"></div><span class="t" style="left:12px;top:289px;font-size:12px;color:#c8c8c8">添加调整</span><svg width="0" height="0" style="left:0;top:0"><defs><linearGradient id="gh" x1="0" y1="0" x2="1" y2="0"><stop offset="0" stop-color="#444"/><stop offset="1" stop-color="#d0d0d0"/></linearGradient><linearGradient id="gv" x1="0" y1="0" x2="0" y2="1"><stop offset="0" stop-color="#666"/><stop offset="1" stop-color="#d0d0d0"/></linearGradient><linearGradient id="gd" x1="0" y1="0" x2="1" y2="1"><stop offset="0" stop-color="#cfcfcf"/><stop offset=".5" stop-color="#6a6a6a"/><stop offset="1" stop-color="#cfcfcf"/></linearGradient></defs></svg><svg style="left:51px;top:312px" width="18" height="18" viewBox="0 0 18 18"><circle cx="9" cy="9" r="4" fill="#777" stroke="#d0d0d0" stroke-width="1.300"/><path d="M9 5A4 4 0 0 1 9 13Z" fill="#d0d0d0"/><path d="M15.2 9.0L17.6 9.0" stroke="#d0d0d0" stroke-width="1.600"/><path d="M13.4 13.4L15.1 15.1" stroke="#d0d0d0" stroke-width="1.600"/><path d="M9.0 15.2L9.0 17.6" stroke="#d0d0d0" stroke-width="1.600"/><path d="M4.6 13.4L2.9 15.1" stroke="#d0d0d0" stroke-width="1.600"/><path d="M2.8 9.0L0.4 9.0" stroke="#d0d0d0" stroke-width="1.600"/><path d="M4.6 4.6L2.9 2.9" stroke="#d0d0d0" stroke-width="1.600"/><path d="M9.0 2.8L9.0 0.4" stroke="#d0d0d0" stroke-width="1.600"/><path d="M13.4 4.6L15.1 2.9" stroke="#d0d0d0" stroke-width="1.600"/></svg>
<svg style="left:75px;top:315px" width="18" height="12" viewBox="0 0 18 12"><path d="M0.500 11.500V4L2 6L3.500 2.500L5 5.500L6.500 1.500L8 5L9.500 0.500L11 5L12.500 2L14 5.500L15.500 3L17.500 6V11.500Z" fill="#bdbdbd"/><path d="M0 8.500H18" stroke="#8a8a8a" stroke-width=".8"/></svg>
<svg style="left:100px;top:314px" width="17" height="14" viewBox="0 0 17 14"><rect width="17" height="14" fill="#6a6a6a"/><path d="M0 5H17M0 9.500H17M6 0V14M11.500 0V14" stroke="#b4b4b4" stroke-width=".9"/><path d="M1 13C8 13 8 1 16 1" fill="none" stroke="#ececec" stroke-width="1.400"/><rect x="0.500" y="0.500" width="16" height="13" fill="none" stroke="#b8b8b8" stroke-width="1"/></svg>
<svg style="left:124px;top:314px" width="17" height="14" viewBox="0 0 17 14"><rect width="17" height="14" fill="#6e6e6e"/><path d="M0 14L17 0V14Z" fill="#c6c6c6"/><path d="M2.500 5H7M4.800 2.800V7.200" stroke="#e8e8e8" stroke-width="1.200"/><path d="M10 10H14.500" stroke="#444" stroke-width="1.200"/><rect x="0.500" y="0.500" width="16" height="13" fill="none" stroke="#b8b8b8" stroke-width="1"/></svg>
<svg style="left:148px;top:314px" width="17" height="15" viewBox="0 0 17 15"><path d="M0.500 0.500H16.500L8.500 14.500Z" fill="url(#gv)" stroke="#c4c4c4" stroke-width="1.200"/></svg>
<svg style="left:40px;top:341px" width="17" height="14" viewBox="0 0 17 14"><rect width="17" height="14" fill="#777"/><rect x="1" y="1" width="15" height="5" fill="url(#gh)"/><path d="M4 1V6M7 1V6M10 1V6M13 1V6" stroke="#555" stroke-width="1.200"/><rect x="1" y="8" width="15" height="5" fill="url(#gh)"/><rect x="0.500" y="0.500" width="16" height="13" fill="none" stroke="#b8b8b8" stroke-width="1"/></svg>
<svg style="left:62px;top:340px" width="19" height="16" viewBox="0 0 19 16"><path d="M9.500 0V4M2.500 4H16.500M9.500 4V6" stroke="#b8b8b8" stroke-width="1.600" fill="none"/><path d="M4 4L1 12H7ZM15 4L12 12H18Z" fill="none" stroke="#b8b8b8" stroke-width="1"/><path d="M0.500 12H7.500A3.500 3 0 0 1 0.500 12ZM11.500 12H18.500A3.500 3 0 0 1 11.500 12Z" fill="#b8b8b8"/><path d="M7.500 1.500L9.500 4L11.500 1.500Z" fill="#b8b8b8"/></svg>
<svg style="left:88px;top:341px" width="17" height="14" viewBox="0 0 17 14"><rect width="17" height="14" fill="#555"/><rect x="8.500" y="1" width="7.500" height="12" fill="url(#gd)"/><rect x="8.500" y="1" width="7.500" height="12" fill="#ccc" opacity=".6"/><rect x="0.500" y="0.500" width="16" height="13" fill="none" stroke="#b8b8b8" stroke-width="1"/></svg>
<svg style="left:111px;top:340px" width="19" height="17" viewBox="0 0 19 17"><rect x="0.500" y="2.500" width="13" height="8" fill="#9a9a9a" stroke="#b8b8b8"/><rect x="3" y="0.500" width="4" height="2" fill="#b8b8b8"/><circle cx="7" cy="6.500" r="2.300" fill="#555" stroke="#ddd" stroke-width=".8"/><circle cx="12" cy="10.500" r="5" fill="#8c8c8c" fill-opacity=".75" stroke="#d8d8d8" stroke-width="1.200"/></svg>
<svg style="left:135px;top:340px" width="18" height="16" viewBox="0 0 18 16"><circle cx="9" cy="5" r="4.600" fill="#c8c8c8"/><circle cx="5" cy="11" r="4.600" fill="#bdbdbd"/><circle cx="13" cy="11" r="4.600" fill="#b0b0b0"/><path d="M9 8.500V12M9 8.500L5.500 6.500M9 8.500L12.500 6.500" stroke="#444" stroke-width="1.400"/></svg>
<svg style="left:160px;top:341px" width="17" height="14" viewBox="0 0 17 14"><rect width="17" height="14" fill="#666"/><rect x="1" y="1" width="5" height="4" fill="#bbb"/><rect x="1" y="5" width="5" height="4" fill="#999"/><path d="M0 5H17M0 9.500H17M6 0V14M11.500 0V14" stroke="#c4c4c4" stroke-width="1"/><rect x="0.500" y="0.500" width="16" height="13" fill="none" stroke="#b8b8b8" stroke-width="1"/></svg>
<svg style="left:52px;top:368px" width="17" height="14" viewBox="0 0 17 14"><rect width="17" height="14" fill="#b6b6b6"/><ellipse cx="8.500" cy="7" rx="5.500" ry="4" fill="#6a6a6a" transform="rotate(-25 8.500 7)"/><path d="M2 12L15 2" stroke="#c8c8c8" stroke-width="1.400"/><rect x="0.500" y="0.500" width="16" height="13" fill="none" stroke="#b8b8b8" stroke-width="1"/></svg>
<svg style="left:76px;top:368px" width="17" height="14" viewBox="0 0 17 14"><rect width="17" height="14" fill="url(#gd)"/><path d="M0 10L10 0M6 14L17 3" stroke="#5a5a5a" stroke-width="2.500" opacity=".7"/><rect x="0.500" y="0.500" width="16" height="13" fill="none" stroke="#b8b8b8" stroke-width="1"/></svg>
<svg style="left:100px;top:368px" width="17" height="14" viewBox="0 0 17 14"><rect width="17" height="14" fill="#c0c0c0"/><path d="M1 10.500H4V8.500H7V6.500H10V4.500H13V3H16V6H13V8H10V10H7V12H1Z" fill="#4e4e4e"/><rect x="0.500" y="0.500" width="16" height="13" fill="none" stroke="#b8b8b8" stroke-width="1"/></svg>
<svg style="left:124px;top:368px" width="17" height="14" viewBox="0 0 17 14"><rect width="17" height="14" fill="#a8a8a8"/><path d="M0 0L8.500 7L0 14Z" fill="#666"/><path d="M17 0L8.500 7L17 14Z" fill="#6e6e6e"/><path d="M0 0L8.500 7L17 0Z" fill="#bcbcbc"/><rect x="0.500" y="0.500" width="16" height="13" fill="none" stroke="#b8b8b8" stroke-width="1"/></svg>
<svg style="left:148px;top:368px" width="17" height="14" viewBox="0 0 17 14"><rect width="17" height="14" fill="url(#gh)"/><rect x="0.500" y="0.500" width="16" height="13" fill="none" stroke="#b8b8b8" stroke-width="1"/></svg>
<div class="phead" style="top:398px;height:17px;background:#3a3a3a;border-bottom:1px solid #2c2c2c;box-sizing:border-box"><div class="ptab on" style="left:0px;width:36px;font-size:11px">图层</div><div class="ptab" style="left:36px;width:38px;font-size:11px">通道</div><div class="ptab" style="left:74px;width:38px;font-size:11px">路径</div><div class="ptab" style="left:112px;width:38px;font-size:11px">段落</div><div class="ptab" style="left:150px;width:61px;font-size:11px">历史记录</div><svg style="left:232px;top:5px" width="11" height="8"><path d="M0 2H4.500L2.250 5.500Z" fill="#e0e0e0"/><path d="M5.500 0.500H11M5.500 2.500H11M5.500 4.500H11M5.500 6.500H11" stroke="#d0d0d0" stroke-width="1"/></svg></div>
<div class="pbody" style="top:415px;height:231px"></div><div class="a" style="left:8px;top:420px;width:70px;height:19px;box-sizing:border-box;border:1px solid #484848;border-radius:3px;background:linear-gradient(#5e5e5e,#565656)"></div><svg style="left:13px;top:425px" width="9" height="9" viewBox="0 0 9 9"><circle cx="3.500" cy="3.500" r="2.600" fill="none" stroke="#8e8e8e" stroke-width="1.200"/><path d="M5.500 5.500L8.500 8.500" stroke="#8e8e8e" stroke-width="1.300"/></svg>
<span class="t" style="left:29px;top:422px;font-size:12px;color:#9a9a9a">类型</span><svg style="left:67px;top:424px" width="7" height="11" viewBox="0 0 7 11"><path d="M0.500 4L3.500 0.500L6.500 4ZM0.500 7L3.500 10.500L6.500 7Z" fill="#9a9a9a"/></svg>
<svg style="left:99px;top:423px" width="13" height="11" viewBox="0 0 13 11"><rect x="0.500" y="0.500" width="12" height="10" fill="none" stroke="#828282"/><path d="M2 9L5 5.500L7 7.500L9 6L11 9Z" fill="#828282"/><circle cx="9" cy="3.500" r="1" fill="#828282"/></svg>
<svg style="left:123px;top:423px" width="12" height="12" viewBox="0 0 12 12"><circle cx="6" cy="6" r="5.200" fill="none" stroke="#828282" stroke-width="1.200"/><path d="M2.300 9.700A5.200 5.200 0 0 0 9.700 2.300Z" fill="#828282"/></svg>
<svg style="left:146px;top:421px" width="13" height="15"><text x="0.500" y="12.500" font-family="Liberation Serif,serif" font-size="15" fill="#828282">T</text></svg><svg style="left:171px;top:423px" width="12" height="12" viewBox="0 0 12 12"><rect x="2" y="2" width="8" height="8" fill="none" stroke="#828282"/><rect x="0" y="0" width="3.500" height="3.500" fill="#828282"/><rect x="8.500" y="0" width="3.500" height="3.500" fill="#828282"/><rect x="0" y="8.500" width="3.500" height="3.500" fill="#828282"/><rect x="8.500" y="8.500" width="3.500" height="3.500" fill="#828282"/></svg>
<svg style="left:196px;top:422px" width="13" height="13" viewBox="0 0 13 13"><path d="M3.500 0.500H8.500L11.500 3.500V10.500H3.500Z" fill="none" stroke="#828282"/><rect x="0.500" y="6.500" width="6" height="6" fill="#828282"/></svg>
<div class="a" style="left:231px;top:421px;width:8px;height:16px;border-radius:2px;background:linear-gradient(#7a7a7a 0,#7a7a7a 45%,#444 45%,#3c3c3c 100%);border:1px solid #3a3a3a;box-sizing:border-box"></div><div class="a" style="left:3px;top:442px;width:243px;height:1px;background:#3e3e3e;border-bottom:1px solid #5e5e5e"></div><div class="a" style="left:8px;top:446px;width:110px;height:21px;box-sizing:border-box;border:1px solid #353535;border-radius:3px;background:linear-gradient(#6c6c6c,#585858);box-shadow:inset 0 1px 0 #7e7e7e"></div><span class="t" style="left:16px;top:449px;font-size:12px;color:#fff">正常</span><svg style="left:107px;top:451px" width="7" height="11" viewBox="0 0 7 11"><path d="M0.500 4L3.500 0.500L6.500 4ZM0.500 7L3.500 10.500L6.500 7Z" fill="#f0f0f0"/></svg>
<span class="t" style="left:126px;top:449px;font-size:12px;color:#f4f4f4">不透明度:</span><div class="a" style="left:183px;top:447px;width:37px;height:20px;background:#3a3a3a;border:1px solid #2e2e2e;box-sizing:border-box;font-size:11px;line-height:18px;color:#fff;padding-left:3px">100%</div><div class="a" style="left:220px;top:447px;width:19px;height:20px;box-sizing:border-box;border:1px solid #353535;border-radius:2px;background:linear-gradient(#767676,#5c5c5c);box-shadow:inset 0 1px 0 #7e7e7e"></div><svg style="left:226px;top:455px" width="7" height="4" viewBox="0 0 7 4"><path d="M0 0H7L3.500 4Z" fill="#f0f0f0"/></svg>
<div class="a" style="left:3px;top:470px;width:243px;height:1px;background:#424242;border-bottom:1px solid #5c5c5c"></div><span class="t" style="left:9px;top:477px;font-size:12px;color:#9e9e9e">锁定:</span><svg style="left:48px;top:480px" width="10" height="10" viewBox="0 0 10 10"><rect x="0.0" y="0.0" width="2.500" height="2.500" fill="#909090"/><rect x="0.0" y="5.0" width="2.500" height="2.500" fill="#909090"/><rect x="2.5" y="2.5" width="2.500" height="2.500" fill="#909090"/><rect x="2.5" y="7.5" width="2.500" height="2.500" fill="#909090"/><rect x="5.0" y="0.0" width="2.500" height="2.500" fill="#909090"/><rect x="5.0" y="5.0" width="2.500" height="2.500" fill="#909090"/><rect x="7.5" y="2.5" width="2.500" height="2.500" fill="#909090"/><rect x="7.5" y="7.5" width="2.500" height="2.500" fill="#909090"/><rect x="0.500" y="0.500" width="9" height="9" fill="none" stroke="#7e7e7e"/></svg>
<svg style="left:68px;top:478px" width="14" height="13" viewBox="0 0 14 13"><path d="M13 0.500L6.500 8" stroke="#858585" stroke-width="1.800" stroke-linecap="round"/><path d="M5.500 7.500L7.500 9.500C6.500 12 3 12.800 0 12C2 11 2.500 8.500 5.500 7.500Z" fill="#858585"/></svg>
<svg style="left:90px;top:478px" width="13" height="13" viewBox="0 0 13 13"><path d="M6.500 1V12M1 6.500H12" stroke="#858585" stroke-width="1.200"/><path d="M6.500 0L8.500 2.500H4.500ZM6.500 13L8.500 10.500H4.500ZM0 6.500L2.500 4.500V8.500ZM13 6.500L10.500 4.500V8.500Z" fill="#858585"/></svg>
<svg style="left:114px;top:478px" width="10" height="12" viewBox="0 0 10 12"><path d="M2.500 6V3.500A2.500 2.500 0 0 1 7.500 3.500V6" fill="none" stroke="#858585" stroke-width="1.400"/><rect x="0.500" y="5.500" width="9" height="6" fill="#858585"/></svg>
<span class="t" style="left:150px;top:477px;font-size:12px;color:#f4f4f4">填充:</span><div class="a" style="left:183px;top:475px;width:37px;height:20px;background:#3a3a3a;border:1px solid #2e2e2e;box-sizing:border-box;font-size:11px;line-height:18px;color:#fff;padding-left:3px">100%</div><div class="a" style="left:220px;top:475px;width:19px;height:20px;box-sizing:border-box;border:1px solid #353535;border-radius:2px;background:linear-gradient(#767676,#5c5c5c);box-shadow:inset 0 1px 0 #7e7e7e"></div><svg style="left:226px;top:483px" width="7" height="4" viewBox="0 0 7 4"><path d="M0 0H7L3.500 4Z" fill="#f0f0f0"/></svg>
<div class="a" style="left:3px;top:499px;width:236px;height:1px;background:#3e3e3e"></div><div class="a" style="left:3px;top:500px;width:236px;height:39px;background:#58647a"></div><div class="a" style="left:3px;top:500px;width:30px;height:39px;background:#535353;border-right:1px solid #3e3e3e"></div><div class="a" style="left:3px;top:539px;width:236px;height:1px;background:#3e3e3e"></div><div class="a" style="left:33px;top:540px;width:1px;height:37px;background:#3e3e3e"></div><div class="a" style="left:3px;top:577px;width:236px;height:1px;background:#3e3e3e"></div><svg style="left:12px;top:516px" width="13" height="9" viewBox="0 0 13 9"><path d="M0.500 4.500C3 0.300 10 0.300 12.500 4.500C10 8.700 3 8.700 0.500 4.500Z" fill="#b4b4b4"/><circle cx="6.500" cy="4.500" r="2.700" fill="#4a4a4a"/><circle cx="7.300" cy="3.800" r="1" fill="#d8d8d8"/></svg>
<svg style="left:12px;top:554px" width="13" height="9" viewBox="0 0 13 9"><path d="M0.500 4.500C3 0.300 10 0.300 12.500 4.500C10 8.700 3 8.700 0.500 4.500Z" fill="#b4b4b4"/><circle cx="6.500" cy="4.500" r="2.700" fill="#4a4a4a"/><circle cx="7.300" cy="3.800" r="1" fill="#d8d8d8"/></svg>
<svg style="left:35px;top:502px" width="36" height="36" viewBox="0 0 36 36"><path d="M0.750 11V0.750H11M25 0.750H35.250V11M35.250 25V35.250H25M11 35.250H0.750V25" fill="none" stroke="#f0f0f0" stroke-width="1.200"/></svg>
<div class="a" style="left:37px;top:504px;width:32px;height:32px;box-sizing:border-box;border:1px solid #161616;background:linear-gradient(200deg,#86d8f4,#a8e8f5 55%,#d0f5fa)"></div><div class="a" style="left:38px;top:524px;width:14px;height:11px;background:radial-gradient(ellipse at 15% 100%,rgba(255,255,255,.9) 30%,rgba(255,255,255,0) 100%)"></div><span class="t" style="left:78px;top:514px;font-size:12px;color:#fff">图层 1</span><div class="a" style="left:37px;top:543px;width:32px;height:32px;background:#fff;border:1px solid #161616;box-sizing:border-box"></div><svg style="left:211px;top:553px" width="10" height="12" viewBox="0 0 10 12"><path d="M2.500 6V3.500A2.500 2.500 0 0 1 7.500 3.500V6" fill="none" stroke="#d0d0d0" stroke-width="1.300"/><rect x="0.500" y="5.500" width="9" height="6" fill="none" stroke="#d0d0d0"/><rect x="4" y="7.500" width="2" height="2" fill="#d0d0d0"/></svg>
<div class="a" style="left:239px;top:500px;width:7px;height:130px;background:#4a4a4a;border-left:1px solid #3e3e3e"></div><svg style="left:0;top:0" width="246" height="646" viewBox="702 64 246 646"><g fill="#cbcbcb"><ellipse cx="792.500" cy="629.500" rx="6" ry="7.500" transform="rotate(-15 792.500 629.500)"/><ellipse cx="803.500" cy="616.500" rx="6" ry="7.300"/><ellipse cx="818.500" cy="618.500" rx="6.300" ry="8"/><ellipse cx="826.500" cy="632" rx="4.300" ry="7" transform="rotate(22 826.500 632)"/><path d="M796 644C798 636 804 629.500 810.500 629.500C817 629.500 821 636 824 644Z"/><text x="728" y="657" font-family="Liberation Sans,sans-serif" font-weight="bold" font-size="32" letter-spacing="2.500">Bai</text></g><circle cx="806" cy="641" r="1.300" fill="#535353"/></svg><div class="a" style="left:6px;top:578px;width:240px;height:52px;background:#535353;border-radius:0 0 0 12px"></div><span class="t" style="left:81px;top:552px;font-size:12px;color:#f4f4f4;font-style:italic">背景</span><div class="a" style="left:2px;top:580px;width:4px;height:47px;background:#3c3c3c;border-radius:0 0 0 4px"></div><div class="a" style="left:3px;top:630px;width:243px;height:16px;background:#4f4f4f;border-top:1px solid #3c3c3c"></div><svg style="left:49px;top:636px" width="14" height="8" viewBox="0 0 14 8"><rect x="0.700" y="0.700" width="6" height="6" rx="3" fill="none" stroke="#8c8c8c" stroke-width="1.400"/><rect x="7.300" y="0.700" width="6" height="6" rx="3" fill="none" stroke="#8c8c8c" stroke-width="1.400"/><path d="M4 3.700H10" stroke="#8c8c8c" stroke-width="1.400"/></svg>
<svg style="left:77px;top:632px" width="14" height="14"><text x="0" y="11" font-family="Liberation Serif,serif" font-style="italic" font-size="13" fill="#8c8c8c">fx</text></svg><svg style="left:104px;top:633px" width="13" height="13" viewBox="0 0 13 13"><rect x="0" y="0" width="13" height="13" fill="#7c7c7c"/><circle cx="6.500" cy="6.500" r="3.500" fill="#4a4a4a"/></svg>
<svg style="left:131px;top:633px" width="13" height="13" viewBox="0 0 13 13"><circle cx="6.500" cy="6.500" r="5.600" fill="none" stroke="#8c8c8c" stroke-width="1.400"/><path d="M2.500 10.500A5.600 5.600 0 0 0 10.500 2.500Z" fill="#8c8c8c"/></svg>
<svg style="left:158px;top:633px" width="14" height="13" viewBox="0 0 14 13"><path d="M0 1H5L6.500 3H14V13H0Z" fill="#8c8c8c"/></svg>
<svg style="left:186px;top:635px" width="12" height="11" viewBox="0 0 12 11"><path d="M0.500 3.500H7.500V11H0.500Z" fill="none" stroke="#8c8c8c"/><path d="M3 0.500H11.500V9" fill="none" stroke="#8c8c8c" stroke-width="1.600"/></svg>
<svg style="left:212px;top:635px" width="11" height="11" viewBox="0 0 11 11"><path d="M0.500 2.500H10.500M1.500 3V11H9.500V3M3.500 4.500V11M5.500 4.500V11M7.500 4.500V11" fill="none" stroke="#8c8c8c"/></svg>
</div>

</div>
</body>
</html>
